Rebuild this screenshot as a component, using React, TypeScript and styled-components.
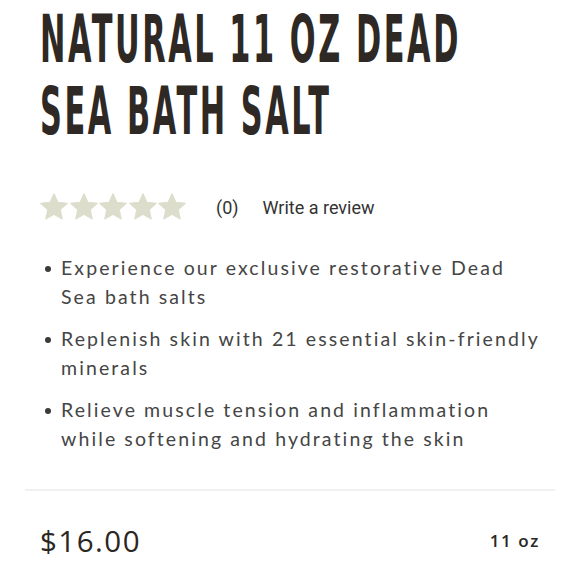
import React from 'react';
import styled, {createGlobalStyle} from 'styled-components';

const GlobalStyle = createGlobalStyle`
    html, body {
        margin: 0;
        padding: 0;
        background: #ffffff;
        overflow-x: hidden;
    }
`;

const Page = styled.div`
    width: 579px;
    padding: 0 24px 0 25px;
    box-sizing: border-box;
    display: flex;
    flex-direction: column;
`;

const Section = styled.div`
    padding: 0 15px;
`;

const Title = styled.h1`
    margin: 0;
    padding-top: 4px;
    height: 148px;
    box-sizing: border-box;
    font-family: "DejaVu Sans", sans-serif;
    font-weight: bold;
    font-size: 66px;
    line-height: 72px;
    letter-spacing: 5.6px;
    color: #2e2925;
    white-space: nowrap;
    transform: scaleX(0.46);
    transform-origin: left top;
`;

const TitleLine = styled.span`
    display: block;
`;

const Rating = styled.div`
    display: flex;
    align-items: center;
    margin-top: 45px;
    height: 28px;
    font-family: Roboto, "Liberation Sans", sans-serif;
    font-size: 18px;
    color: #333;
`;

const Stars = styled.div`
    display: flex;
    gap: 1.5px;
    margin-right: 30px;
`;

const Count = styled.span`
    margin-right: 24px;
`;

const List = styled.ul`
    list-style: none;
    margin: 32px 0 0 0;
    padding: 0;
    display: flex;
    flex-direction: column;
    gap: 13px;
`;

const Item = styled.li`
    display: grid;
    grid-template-columns: 21px 480px;
    font-family: Lato, "Open Sans", sans-serif;
    font-size: 19.5px;
    line-height: 29px;
    letter-spacing: 2.1px;
    color: #454545;
`;

const Dot = styled.span`
    width: 6px;
    height: 6px;
    border-radius: 50%;
    background: #3a3a3a;
    margin: 13px 0 0 5px;
`;

const Divider = styled.hr`
    border: none;
    height: 2px;
    background: #f1f1f1;
    margin: 36px 0 0 0;
`;

const PriceRow = styled.div`
    display: flex;
    justify-content: space-between;
    align-items: center;
    padding: 0 15px;
    height: 98px;
    color: #2b2622;
    font-family: "Open Sans", sans-serif;
`;

const Price = styled.span`
    font-size: 29.5px;
    font-weight: 500;
    letter-spacing: 1.5px;
`;

const Size = styled.span`
    font-size: 17px;
    font-weight: 600;
    letter-spacing: 1.6px;
`;

const Star = () => (
    <svg width="28" height="28" viewBox="1 1 22 22">
        <polygon
            points="12,1.5 15.06,8.29 22.46,9.1 16.95,14.11 18.47,21.4 12,17.7 5.53,21.4 7.05,14.11 1.54,9.1 8.94,8.29"
            fill="#dcddcb"
            stroke="#dcddcb"
            strokeWidth="0.8"
            strokeLinejoin="round"
        />
    </svg>
);

const points = [
    'Experience our exclusive restorative Dead Sea bath salts',
    'Replenish skin with 21 essential skin-friendly minerals',
    'Relieve muscle tension and inflammation while softening and hydrating the skin',
];

export default function App() {
    return (
        <>
            <GlobalStyle/>
            <Page>
                <Section>
                    <Title>
                        <TitleLine>NATURAL 11 OZ DEAD</TitleLine>
                        <TitleLine>SEA BATH SALT</TitleLine>
                    </Title>
                    <Rating>
                        <Stars>
                            {[0, 1, 2, 3, 4].map(i => <Star key={i}/>)}
                        </Stars>
                        <Count>(0)</Count>
                        <span>Write a review</span>
                    </Rating>
                    <List>
                        {points.map(p => (
                            <Item key={p}>
                                <Dot/>
                                <span>{p}</span>
                            </Item>
                        ))}
                    </List>
                </Section>
                <Divider/>
                <PriceRow>
                    <Price>$16.00</Price>
                    <Size>11 oz</Size>
                </PriceRow>
            </Page>
        </>
    );
}
